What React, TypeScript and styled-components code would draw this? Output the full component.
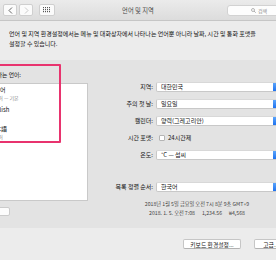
import styled, { createGlobalStyle } from "styled-components";

const GlobalStyle = createGlobalStyle`
  html, body {
    margin: 0;
    padding: 0;
    width: 276px;
    height: 260px;
    overflow: hidden;
    background: #ececec;
  }
  body {
    font-family: "Noto Sans CJK KR", "Noto Sans", sans-serif;
    color: #111;
  }
`;

const font = `"Noto Sans CJK KR", "Noto Sans", sans-serif`;

//#region window
const Window = styled.div`
  width: 276px;
  height: 260px;
  overflow: hidden;
  display: flex;
  flex-direction: column;
  background: #ececec;
`;

const TitleBar = styled.div`
  height: 20px;
  flex: none;
  display: grid;
  grid-template-columns: 1fr auto 1fr;
  align-items: center;
  background: linear-gradient(#ebebeb, #dcdcdc);
  border-bottom: 1px solid #c6c6c6;
`;

const NavGroup = styled.div`
  display: flex;
  align-items: center;
  gap: 2px;
  padding-left: 3px;
`;

const NavButton = styled.div<{ $wide?: boolean }>`
  width: ${({ $wide }) => ($wide ? 16 : 14)}px;
  height: 12px;
  margin-left: ${({ $wide }) => ($wide ? 4 : 0)}px;
  box-sizing: border-box;
  display: flex;
  align-items: center;
  justify-content: center;
  background: #fbfbfb;
  border: 1px solid #cfcfcf;
  border-radius: 2px;
`;

const Title = styled.div`
  font-size: 6.3px;
  color: #4a4a4a;
  text-align: center;
`;

const Search = styled.div`
  justify-self: end;
  margin-right: -15px;
  width: 64px;
  height: 11px;
  box-sizing: border-box;
  display: flex;
  align-items: center;
  justify-content: center;
  gap: 2px;
  background: #fdfdfd;
  border: 1px solid #d2d2d2;
  border-radius: 3px;
  font-size: 5px;
  color: #8a8a8a;
`;

const Description = styled.div`
  padding: 8px 0 0 9px;
  height: 31px;
  font-size: 6px;
  line-height: 10px;
  white-space: nowrap;
`;
//#endregion

//#region panel
const Panel = styled.div`
  height: 168px;
  flex: none;
  display: flex;
  background: #e3e3e3;
  position: relative;
`;

const LeftColumn = styled.div`
  margin-left: -14px;
  width: 102px;
  flex: none;
  padding-top: 11px;
  display: flex;
  flex-direction: column;
`;

const SmallLabel = styled.div`
  font-size: 5.8px;
  line-height: 8px;
  height: 8px;
  white-space: nowrap;
`;

const List = styled.div`
  margin-top: 4px;
  height: 118px;
  box-sizing: border-box;
  background: #fff;
  border: 1px solid #c9c9c9;
  padding: 1px 0 0 2px;
  display: flex;
  flex-direction: column;
`;

const ListItem = styled.div`
  height: 19.5px;
  display: flex;
  flex-direction: column;
  white-space: nowrap;
`;

const ItemName = styled.div`
  font-size: 6px;
  line-height: 9px;
`;

const ItemSub = styled.div`
  font-size: 5px;
  line-height: 8px;
  color: #8a8a8a;
`;

const Segmented = styled.div`
  margin-top: 6px;
  width: 24px;
  height: 9px;
  box-sizing: border-box;
  background: #fcfcfc;
  border: 1px solid #cbcbcb;
  border-radius: 2px;
`;

const Highlight = styled.div`
  position: absolute;
  left: -10px;
  top: 4px;
  width: 71px;
  height: 79px;
  box-sizing: border-box;
  border: 2.5px solid #e8336e;
  border-radius: 1px;
  pointer-events: none;
`;

const Form = styled.div`
  margin-left: 4px;
  width: 210px;
  flex: none;
  padding-top: 18px;
  display: flex;
  flex-direction: column;
`;

const FieldRow = styled.div<{ $spaced?: boolean }>`
  height: 17px;
  margin-top: ${({ $spaced }) => ($spaced ? 15 : 0)}px;
  display: flex;
  align-items: center;
`;

const FieldLabel = styled.div`
  width: 61px;
  margin-right: 3px;
  text-align: right;
  font-size: 6px;
  white-space: nowrap;
`;

const Popup = styled.div`
  width: 126px;
  height: 10px;
  box-sizing: border-box;
  display: flex;
  align-items: center;
  background: #fff;
  border: 1px solid #c8c8c8;
  border-top-color: #d8d8d8;
  border-radius: 2px;
  overflow: hidden;
`;

const PopupText = styled.div`
  flex: 1;
  padding-left: 4px;
  font-size: 6px;
  white-space: nowrap;
`;

const Stepper = styled.div`
  width: 8px;
  height: 100%;
  background: linear-gradient(#5aa4fb, #1f72ef);
`;

const CheckBox = styled.div`
  width: 6px;
  height: 6px;
  margin: 0 3px 0 3px;
  box-sizing: border-box;
  background: #fff;
  border: 1px solid #b4b4b4;
  border-radius: 1px;
`;

const CheckText = styled.div`
  font-size: 6px;
`;

const Sample = styled.div`
  margin-top: 4px;
  text-align: center;
  font-size: 5.2px;
  line-height: 9px;
  color: #444;
  white-space: pre;
`;
//#endregion

//#region footer
const Footer = styled.div`
  flex: 1;
  display: flex;
  align-items: flex-start;
  gap: 13px;
  padding: 11px 0 0 183px;
`;

const Button = styled.div<{ $width: number }>`
  width: ${({ $width }) => $width}px;
  flex: none;
  height: 10px;
  box-sizing: border-box;
  display: flex;
  align-items: center;
  justify-content: center;
  background: #fff;
  border: 1px solid #c6c6c6;
  border-bottom-color: #b2b2b2;
  border-radius: 2px;
  font-family: ${font};
  font-size: 5.8px;
  white-space: nowrap;
`;
//#endregion

const languages = [
  { name: "한국어", sub: "한국어 — 기본" },
  { name: "English", sub: "영어" },
  { name: "日本語", sub: "일본어" },
];

const fields = [
  { label: "지역:", value: "대한민국" },
  { label: "주의 첫 날:", value: "일요일" },
  { label: "캘린더:", value: "양력(그레고리안)" },
];

function GridDots() {
  const dots = [];
  for (let c = 0; c < 4; c++) {
    for (let r = 0; r < 3; r++) {
      dots.push(<rect key={`${c}-${r}`} x={c * 2} y={r * 2} width="1" height="1.2" fill="#555" />);
    }
  }
  return (
    <svg width="8" height="6" viewBox="0 0 8 6">
      {dots}
    </svg>
  );
}

export default function App() {
  return (
    <>
      <GlobalStyle />
      <Window>
        <TitleBar>
          <NavGroup>
            <NavButton>
              <svg width="5" height="7" viewBox="0 0 5 7">
                <path d="M4 0.5 L1 3.5 L4 6.5" fill="none" stroke="#555" strokeWidth="0.9" />
              </svg>
            </NavButton>
            <NavButton>
              <svg width="5" height="7" viewBox="0 0 5 7">
                <path d="M1 0.5 L4 3.5 L1 6.5" fill="none" stroke="#c4c4c4" strokeWidth="0.9" />
              </svg>
            </NavButton>
            <NavButton $wide>
              <GridDots />
            </NavButton>
          </NavGroup>
          <Title>언어 및 지역</Title>
          <Search>
            <svg width="5" height="5" viewBox="0 0 5 5">
              <circle cx="2" cy="2" r="1.5" fill="none" stroke="#888" strokeWidth="0.6" />
              <path d="M3.1 3.1 L4.7 4.7" stroke="#888" strokeWidth="0.7" />
            </svg>
            검색
          </Search>
        </TitleBar>

        <Description>
          언어 및 지역 환경설정에서는 메뉴 및 대화상자에서 나타나는 언어뿐 아니라 날짜, 시간 및 통화 포맷을
          <br />
          설정할 수 있습니다.
        </Description>

        <Panel>
          <LeftColumn>
            <SmallLabel>선호하는 언어:</SmallLabel>
            <List>
              {languages.map((l) => (
                <ListItem key={l.name}>
                  <ItemName>{l.name}</ItemName>
                  <ItemSub>{l.sub}</ItemSub>
                </ListItem>
              ))}
            </List>
            <Segmented />
          </LeftColumn>

          <Form>
            {fields.map((f) => (
              <FieldRow key={f.label}>
                <FieldLabel>{f.label}</FieldLabel>
                <Popup>
                  <PopupText>{f.value}</PopupText>
                  <Stepper />
                </Popup>
              </FieldRow>
            ))}
            <FieldRow>
              <FieldLabel>시간 포맷:</FieldLabel>
              <CheckBox />
              <CheckText>24시간제</CheckText>
            </FieldRow>
            <FieldRow>
              <FieldLabel>온도:</FieldLabel>
              <Popup>
                <PopupText>°C — 섭씨</PopupText>
                <Stepper />
              </Popup>
            </FieldRow>
            <FieldRow $spaced>
              <FieldLabel>목록 정렬 순서:</FieldLabel>
              <Popup>
                <PopupText>한국어</PopupText>
                <Stepper />
              </Popup>
            </FieldRow>
            <Sample>
              {"2018년 1월 5일 금요일 오전 7시 8분 9초 GMT+9\n2018. 1. 5. 오전 7:08      1,234.56      ₩4,568"}
            </Sample>
          </Form>

          <Highlight />
        </Panel>

        <Footer>
          <Button $width={58}>키보드 환경설정...</Button>
          <Button $width={34}>고급...</Button>
        </Footer>
      </Window>
    </>
  );
}
